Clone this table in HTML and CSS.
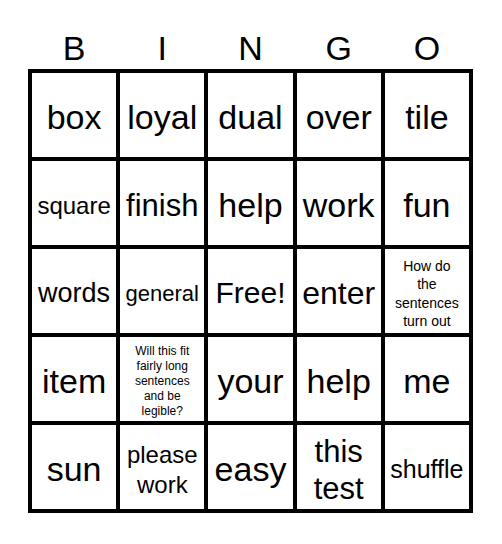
FILE: index.html
```html
<!DOCTYPE html>
<html>
<head>
<meta charset="utf-8">
<link rel="stylesheet" href="styles.css">
</head>
<body>
<div class="card">
  <div class="head">
    <div>B</div><div>I</div><div>N</div><div>G</div><div>O</div>
  </div>
  <div class="grid">
    <div class="cell">box</div>
    <div class="cell">loyal</div>
    <div class="cell">dual</div>
    <div class="cell">over</div>
    <div class="cell">tile</div>

    <div class="cell s24">square</div>
    <div class="cell s31">finish</div>
    <div class="cell">help</div>
    <div class="cell">work</div>
    <div class="cell">fun</div>

    <div class="cell s27">words</div>
    <div class="cell s22">general</div>
    <div class="cell s30">Free!</div>
    <div class="cell s32">enter</div>
    <div class="cell s14">How do the sentences turn out</div>

    <div class="cell">item</div>
    <div class="cell s12">Will this fit fairly long sentences and be legible?</div>
    <div class="cell">your</div>
    <div class="cell">help</div>
    <div class="cell">me</div>

    <div class="cell">sun</div>
    <div class="cell s24 two">please work</div>
    <div class="cell">easy</div>
    <div class="cell s31 two">this test</div>
    <div class="cell s25">shuffle</div>
  </div>
</div>
</body>
</html>
```
FILE: styles.css
```css
html, body {
  margin: 0;
  padding: 0;
  background: #fff;
}
body {
  font-family: "Liberation Sans", Arial, sans-serif;
  color: #000;
}
.card {
  width: 445px;
  margin-left: 28px;
  padding-top: 28px;
}
.head {
  display: grid;
  grid-template-columns: repeat(5, 1fr);
  column-gap: 4px;
  padding: 0 4px;
  height: 41px;
  font-size: 34px;
  line-height: 40px;
  text-align: center;
}
.grid {
  display: grid;
  grid-template-columns: repeat(5, 1fr);
  grid-template-rows: repeat(5, 84px);
  gap: 4px;
  padding: 4px;
  background: #000;
}
.cell {
  background: #fff;
  display: flex;
  align-items: center;
  justify-content: center;
  text-align: center;
  font-size: 34px;
  line-height: 1.15;
  padding: 5px 3px 0;
  overflow: hidden;
}
.s32 { font-size: 32px; }
.s31 { font-size: 31px; }
.s30 { font-size: 30px; }
.s27 { font-size: 27px; }
.s25 { font-size: 25px; }
.s24 { font-size: 24px; }
.s22 { font-size: 22px; }
.s14 { font-size: 14px; line-height: 18.5px; padding: 5px 8px 0; }
.s12 { font-size: 12px; line-height: 15px; padding: 5px 10px 0; }
.two.s24 { line-height: 30px; padding: 5px 10px 0; }
.two.s31 { line-height: 37px; padding: 5px 14px 0; }
```
